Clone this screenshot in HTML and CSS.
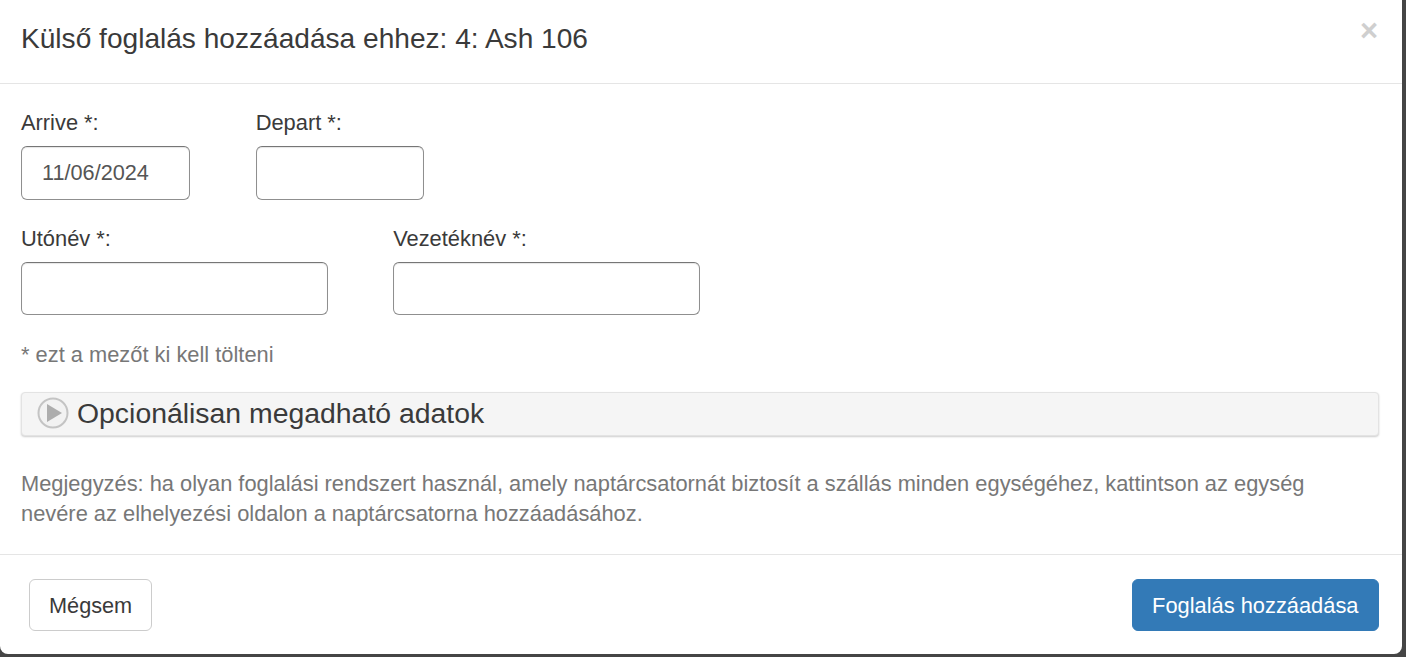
FILE: index.html
```html
<!DOCTYPE html>
<html lang="en">
<head>
    <meta charset="UTF-8">
    <title>Külső foglalás hozzáadása</title>
    <link rel="stylesheet" href="styles.css">
</head>
<body>

    <div class="modal">

        <div class="modal-header">
            <h4 class="modal-title">Külső foglalás hozzáadása ehhez: 4: Ash 106</h4>
            <span class="close">×</span>
        </div>

        <div class="modal-body">
            <div class="form-row form-row-dates">
                <div class="field field-date">
                    <label for="arrive">Arrive *:</label>
                    <input type="text" id="arrive" value="11/06/2024">
                </div>
                <div class="field field-date">
                    <label for="depart">Depart *:</label>
                    <input type="text" id="depart">
                </div>
            </div>

            <div class="form-row form-row-names">
                <div class="field field-name">
                    <label for="firstname">Utónév *:</label>
                    <input type="text" id="firstname">
                </div>
                <div class="field field-name">
                    <label for="lastname">Vezetéknév *:</label>
                    <input type="text" id="lastname">
                </div>
            </div>

            <p class="required-note">* ezt a mezőt ki kell tölteni</p>

            <div class="optional-bar">
                <svg class="play-icon" width="32" height="32" viewBox="0 0 32 32">
                    <circle cx="16" cy="16" r="14.5" fill="#f2f2f2" stroke="#c4c4c4" stroke-width="2"/>
                    <path d="M10 7 L25 16 L10 25 Z" fill="#adadad"/>
                </svg>
                <span>Opcionálisan megadható adatok</span>
            </div>

            <p class="note">Megjegyzés: ha olyan foglalási rendszert használ, amely naptárcsatornát biztosít a szállás minden egységéhez, kattintson az egység nevére az elhelyezési oldalon a naptárcsatorna hozzáadásához.</p>
        </div>

        <div class="modal-footer">
            <button class="btn btn-default">Mégsem</button>
            <button class="btn btn-primary">Foglalás hozzáadása</button>
        </div>

    </div>

</body>
</html>
```

FILE: styles.css
```css
* {
    box-sizing: border-box;
}

html, body {
    height: 100%;
}

body {
    margin: 0;
    background-color: #454545;
    font-family: "Liberation Sans", Arial, sans-serif;
    color: #3a3a3a;
    overflow: hidden;
}

.modal {
    width: 1402px;
    height: 654px;
    background: #ffffff;
    border-radius: 0 0 8px 8px;
}

.modal-header {
    display: flex;
    justify-content: space-between;
    height: 84px;
    padding: 21px 24px 0 21px;
    border-bottom: 1px solid #e5e5e5;
}

.modal-title {
    margin: 0;
    font-size: 28.1px;
    font-weight: 400;
    line-height: 35px;
}

.close {
    margin-top: -7px;
    font-size: 31px;
    font-weight: 700;
    line-height: 34px;
    color: #cfcfcf;
}

.modal-body {
    height: 470px;
    padding: 25px 23px 0 21px;
}

.form-row {
    display: flex;
    gap: 65.5px;
}

.form-row-dates {
    gap: 66.2px;
    margin-bottom: 25px;
}

.form-row-names {
    margin-bottom: 26px;
}

label {
    display: block;
    font-size: 21.85px;
    line-height: 28px;
    margin-bottom: 9px;
}

input[type="text"] {
    display: block;
    width: 100%;
    height: 53.5px;
    padding: 0 20px;
    border: 1px solid #8f8f8f;
    border-top-color: #767676;
    border-radius: 6px;
    box-shadow: inset 0 1px 1px rgba(0, 0, 0, 0.1);
    font-family: inherit;
    font-size: 21.7px;
    color: #555;
}

.field-date {
    width: 168.5px;
}

.field-name {
    width: 306.7px;
}

.required-note {
    margin: 0 0 23px;
    font-size: 21.85px;
    line-height: 28px;
    color: #777;
}

.optional-bar {
    display: flex;
    align-items: center;
    gap: 8px;
    height: 44px;
    padding: 0 0 2px 15px;
    background: #f5f5f5;
    border: 1px solid #e3e3e3;
    border-radius: 4px;
    box-shadow: 0 1px 2px rgba(0, 0, 0, 0.2);
    font-size: 28.4px;
}

.note {
    max-width: 1320px;
    margin: 33px 0 0;
    font-size: 21.85px;
    line-height: 30px;
    color: #777;
}

.modal-footer {
    display: flex;
    justify-content: space-between;
    height: 100px;
    padding: 24px 23px 0 29px;
    border-top: 1px solid #e5e5e5;
}

.btn {
    height: 52px;
    padding: 1px 19px 0;
    border: 1px solid transparent;
    border-radius: 6px;
    font-family: inherit;
    font-size: 21.7px;
}

.btn-default {
    background: #ffffff;
    border-color: #cccccc;
    color: #3a3a3a;
}

.btn-primary {
    padding: 1px 19.5px 0;
    font-size: 21.85px;
    background: #337ab7;
    border-color: #337ab7;
    color: #ffffff;
}
```
